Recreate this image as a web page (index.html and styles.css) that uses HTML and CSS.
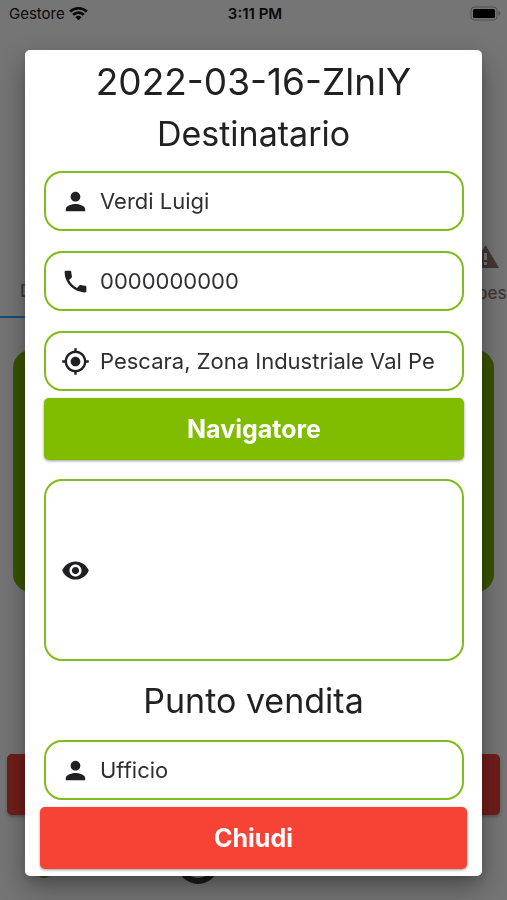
FILE: index.html
```html
<!DOCTYPE html>
<html lang="it">
<head>
<meta charset="utf-8">
<meta name="viewport" content="width=device-width, initial-scale=1">
<title>Gestore</title>
<link rel="stylesheet" href="styles.css">
</head>
<body>
<svg class="sprite" aria-hidden="true">
  <symbol id="person" viewBox="0 0 24 24"><path d="M12 12c2.210 0 4-1.790 4-4s-1.790-4-4-4-4 1.790-4 4 1.790 4 4 4zm0 2c-2.670 0-8 1.340-8 4v2h16v-2c0-2.660-5.330-4-8-4z"/></symbol>
</svg>
<div class="app">
  <header class="status">
    <span class="carrier">Gestore
      <svg width="19" height="15" viewBox="0 0 19 15" aria-hidden="true"><path d="M1.200 5.600a12 12 0 0 1 16.600 0M4.200 8.700a7.600 7.600 0 0 1 10.600 0" fill="none" stroke="currentColor" stroke-width="2.700"/><path d="M9.500 14.200 6.400 11.200a4.500 4.500 0 0 1 6.200 0z"/></svg>
    </span>
    <strong class="clock">3:11 PM</strong>
    <svg class="battery" width="31" height="15" viewBox="0 0 31 15" aria-hidden="true"><rect x="1" y="1" width="26" height="13" rx="3.500" fill="none" stroke="#505050" stroke-width="1"/><rect x="3" y="3" width="22" height="9" rx="1.500"/><path d="M28.500 5v5q2-.8 2-2.500t-2-2.500z" fill="#505050"/></svg>
  </header>
  <nav class="tabs">
    <a class="tab current" href="#da-fare">D</a>
    <a class="tab" href="#sospesi"><svg width="27" height="23" viewBox="0 0 27 23" aria-hidden="true"><path fill-rule="evenodd" d="M13.500 0 27 23H0zM12 8v7h3V8zm0 9v3h3v-3z"/></svg><span>pes</span></a>
  </nav>
  <main class="content">
    <div class="card"></div>
    <div class="alert"></div>
  </main>
  <footer class="bottom">
    <span class="leaf"></span>
    <span class="ring"></span>
  </footer>
</div>
<div class="overlay">
  <section class="dialog" role="dialog" aria-modal="true" aria-labelledby="order">
    <h1 id="order">2022-03-16-ZlnIY</h1>
    <h2>Destinatario</h2>
    <div class="fields">
      <label class="field"><svg class="icon" role="img" aria-label="Nome"><use href="#person"/></svg><input type="text" value="Verdi Luigi" readonly></label>
      <label class="field"><svg class="icon" viewBox="0 0 24 24" role="img" aria-label="Telefono"><path d="M6.620 10.790c1.440 2.830 3.760 5.140 6.590 6.590l2.200-2.200c.27-.27.67-.36 1.020-.24 1.120.37 2.330.57 3.570.57.55 0 1 .45 1 1V20c0 .55-.45 1-1 1-9.390 0-17-7.610-17-17 0-.55.45-1 1-1h3.500c.55 0 1 .45 1 1 0 1.250.2 2.450.57 3.570.11.35.03.74-.25 1.020l-2.200 2.200z"/></svg><input type="tel" value="0000000000" readonly></label>
      <label class="field"><svg class="icon" viewBox="0 0 24 24" role="img" aria-label="Indirizzo"><path d="M12 8c-2.210 0-4 1.790-4 4s1.790 4 4 4 4-1.790 4-4-1.790-4-4-4zm8.940 3c-.46-4.170-3.770-7.480-7.940-7.940V1h-2v2.060C6.830 3.520 3.520 6.830 3.060 11H1v2h2.060c.46 4.170 3.770 7.480 7.940 7.940V23h2v-2.060c4.170-.46 7.480-3.770 7.940-7.940H23v-2h-2.060zM12 19c-3.870 0-7-3.130-7-7s3.130-7 7-7 7 3.130 7 7-3.130 7-7 7z"/></svg><input type="text" value="Pescara, Zona Industriale Val Pe" readonly></label>
    </div>
    <button class="button go" type="button">Navigatore</button>
    <label class="field notes"><svg class="icon" viewBox="0 0 24 24" role="img" aria-label="Note"><path d="M12 4.500C7 4.500 2.730 7.610 1 12c1.730 4.390 6 7.500 11 7.500s9.270-3.110 11-7.500c-1.730-4.390-6-7.500-11-7.500zM12 17c-2.760 0-5-2.240-5-5s2.240-5 5-5 5 2.240 5 5-2.240 5-5 5zm0-8c-1.660 0-3 1.340-3 3s1.340 3 3 3 3-1.340 3-3-1.340-3-3-3z"/></svg><textarea readonly></textarea></label>
    <h2 class="shop">Punto vendita</h2>
    <label class="field"><svg class="icon" role="img" aria-label="Punto vendita"><use href="#person"/></svg><input type="text" value="Ufficio" readonly></label>
    <button class="button close" type="button">Chiudi</button>
  </section>
</div>
</body>
</html>
```
FILE: styles.css
```css
* { box-sizing: border-box; }

body {
  margin: 0;
  font-family: Inter, "Liberation Sans", sans-serif;
  color: #212121;
  background: #757575;
}

.sprite { position: absolute; width: 0; height: 0; }

.app {
  min-height: 100vh;
  display: flex;
  flex-direction: column;
  overflow: hidden;
}

.status {
  display: grid;
  grid-template-columns: 1fr auto 1fr;
  align-items: center;
  height: 27px;
  padding: 0 6px 0 9px;
  font-size: 15px;
  color: #080808;
}
.carrier { display: flex; align-items: center; gap: 4px; }
.carrier svg, .battery { fill: #000; }
.clock { font-weight: 600; }
.battery { justify-self: end; }

.tabs {
  display: flex;
  justify-content: space-between;
  height: 291px;
}
.tab {
  display: flex;
  flex-direction: column;
  justify-content: flex-end;
  gap: 14px;
  padding-bottom: 14px;
  font-size: 17px;
  font-weight: 500;
  line-height: 22px;
  color: #443735;
  text-decoration: none;
  fill: currentColor;
}
.tab:last-child { width: 35px; }
.tab span { padding-left: 5px; }
.current {
  width: 120px;
  padding-left: 20px;
  border-bottom: 2px solid #174d7d;
}

.content { padding: 32px 7px 0; }
.card {
  height: 242px;
  margin: 0 6px;
  border-radius: 18px;
  background: #385400;
}
.alert {
  height: 61px;
  margin-top: 162px;
  border-radius: 5px;
  background: #701e19;
  box-shadow: 0 2px 3px #0004;
}

.bottom {
  display: flex;
  align-items: flex-start;
  gap: 125px;
  padding: 27px 0 0 36px;
}
.leaf {
  width: 16px;
  height: 36px;
  border-radius: 8px;
  background: #385400;
}
.ring {
  width: 42px;
  height: 42px;
  border: 6px solid #1c1c1c;
  border-radius: 50%;
}

.overlay {
  position: fixed;
  inset: 0;
  padding: 50px 25px 24px;
  overflow: auto;
}
.dialog {
  display: flex;
  flex-direction: column;
  min-height: 100%;
  padding: 10px 15px 7px;
  border-radius: 5px;
  background: #fff;
  box-shadow: 0 12px 28px #0005, 0 4px 8px #0002;
}

h1, h2 {
  margin: 0;
  font-weight: 400;
  text-align: center;
}
h1 { font-size: 37px; line-height: 44px; }
h2 { font-size: 34px; line-height: 60px; }
h2.shop { line-height: 79px; }

.fields { display: grid; gap: 20px; margin-top: 7px; }
.field {
  display: flex;
  align-items: center;
  gap: 10px;
  height: 60px;
  padding: 0 14px 0 15px;
  border: 2px solid #80bc1c;
  border-radius: 18px;
}
.fields, .dialog > .field, .go { margin-left: 4px; margin-right: 3px; }
.notes { height: 182px; }
.icon { flex: none; width: 29px; height: 29px; fill: #202022; }

input, textarea {
  flex: 1;
  min-width: 0;
  padding: 0;
  border: 0;
  outline: 0;
  background: none;
  color: #303033;
  font: 400 22px/30px Inter, "Liberation Sans", sans-serif;
}
textarea { height: 150px; resize: none; }

.button {
  height: 62px;
  border: 0;
  border-radius: 5px;
  color: #fff;
  font: 700 25px/30px Inter, "Liberation Sans", sans-serif;
  box-shadow: 0 1px 3px #0006;
}
.go { margin-top: 7px; margin-bottom: 19px; background: #80bc00; }
.close { margin-top: 7px; background: #f64336; }
```
